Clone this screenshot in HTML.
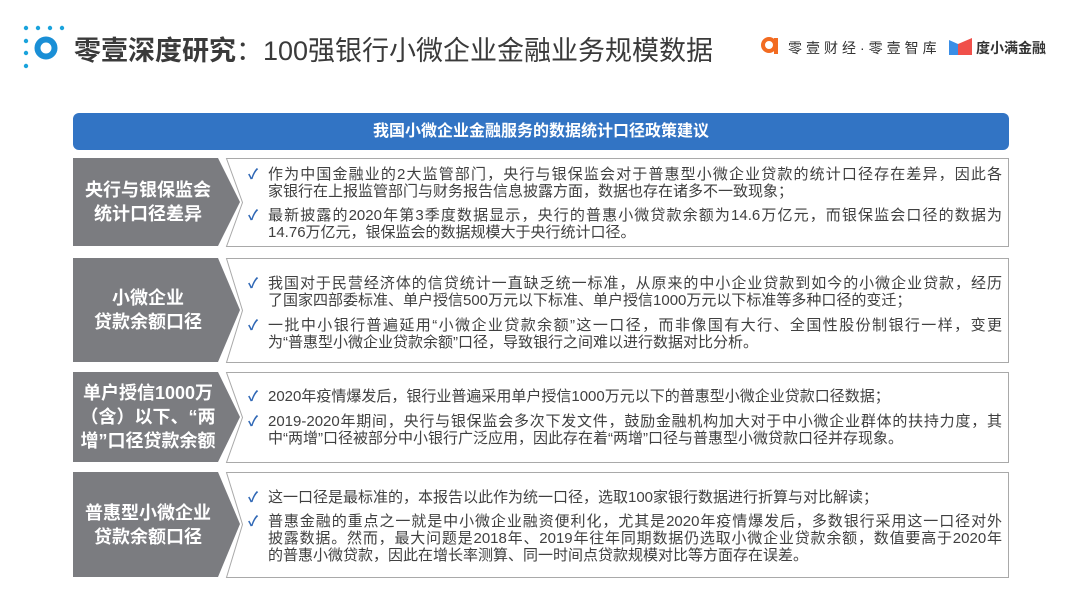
<!DOCTYPE html>
<html><head><meta charset="utf-8"><style>
body{margin:0;width:1080px;height:608px;background:#fff;position:relative;overflow:hidden;font-family:"Liberation Sans","Noto Sans CJK SC",sans-serif;}
.abs{position:absolute}
.lab{position:absolute;left:73px;width:150px;color:#fff;font-weight:bold;font-size:18px;line-height:24px;text-align:center;display:flex;flex-direction:column;justify-content:center}
.txt{position:absolute;left:268px;width:734px;color:#404040;font-size:15px;line-height:17px}
.l{text-align:justify;text-align-last:justify;white-space:nowrap}
.e{white-space:nowrap}
.ck{position:absolute;left:-20px;color:#2f67b5;font-size:14px;font-weight:bold}
.p{position:relative}
</style></head><body>
<svg class="abs" style="left:20px;top:22px" width="50" height="50">
<g fill="#1aa3dc"><circle cx="6" cy="6" r="2.2"/><circle cx="18" cy="6" r="2.2"/><circle cx="30" cy="6" r="2.2"/><circle cx="42" cy="6" r="2.2"/><circle cx="6" cy="19" r="2.2"/><circle cx="6" cy="31" r="2.2"/><circle cx="6" cy="44" r="2.2"/></g>
<circle cx="26" cy="26" r="8.5" fill="none" stroke="#1a8fd6" stroke-width="6"/>
</svg>
<div class="abs" style="left:74px;top:29px;font-size:27px;color:#3a3a3a;white-space:nowrap"><b>零壹深度研究</b>：100强银行小微企业金融业务规模数据</div>
<svg class="abs" style="left:760px;top:36px" width="22" height="18"><circle cx="9" cy="9" r="6" fill="none" stroke="#f26b21" stroke-width="4"/><path d="M16 2v16" stroke="#f26b21" stroke-width="4"/></svg>
<div class="abs" style="left:788px;top:38px;font-size:14px;color:#333;letter-spacing:4px;white-space:nowrap">零壹财经·零壹智库</div>
<svg class="abs" style="left:949px;top:37px" width="24" height="18"><path d="M0 3l9 4v11H0z" fill="#3a8ee6"/><path d="M9 7l14-6v17H9z" fill="#f0504a"/></svg>
<div class="abs" style="left:976px;top:38px;font-size:14px;color:#333;font-weight:bold;white-space:nowrap">度小满金融</div>
<div class="abs" style="left:73px;top:113px;width:936px;height:37px;background:#3274c4;border-radius:6px;color:#fff;font-weight:bold;font-size:16px;line-height:37px;text-align:center">我国小微企业金融服务的数据统计口径政策建议</div>
<svg class="abs" style="left:0;top:0" width="1080" height="608">
<g fill="#7b7c80">
<polygon points="73,158 218,158 240,202 218,246 73,246"/>
<polygon points="73,258 218,258 240,310 218,362 73,362"/>
<polygon points="73,372 218,372 240,417 218,462 73,462"/>
<polygon points="73,472 218,472 240,524 218,577 73,577"/>
</g>
<g fill="#fff" stroke="#a9a9a9" stroke-width="1">
<polygon points="226.5,158.5 1008.5,158.5 1008.5,246.5 226.5,246.5 242.5,202.5"/>
<polygon points="226.5,258.5 1008.5,258.5 1008.5,362.5 226.5,362.5 242.5,310.5"/>
<polygon points="226.5,372.5 1008.5,372.5 1008.5,462.5 226.5,462.5 242.5,417.5"/>
<polygon points="226.5,472.5 1008.5,472.5 1008.5,577.5 226.5,577.5 242.5,524.5"/>
</g>
</svg>
<div class="lab" style="top:158px;height:88px">央行与银保监会<br>统计口径差异</div>
<div class="lab" style="top:258px;height:104px">小微企业<br>贷款余额口径</div>
<div class="lab" style="top:372px;height:90px">单户授信1000万<br>（含）以下、“两<br>增”口径贷款余额</div>
<div class="lab" style="top:472px;height:105px">普惠型小微企业<br>贷款余额口径</div>

<div class="txt" style="top:166px"><div class="p"><span class="ck">✓</span><div class="l">作为中国金融业的2大监管部门，央行与银保监会对于普惠型小微企业贷款的统计口径存在差异，因此各</div><div class="e">家银行在上报监管部门与财务报告信息披露方面，数据也存在诸多不一致现象；</div></div></div>
<div class="txt" style="top:207px"><div class="p"><span class="ck">✓</span><div class="l">最新披露的2020年第3季度数据显示，央行的普惠小微贷款余额为14.6万亿元，而银保监会口径的数据为</div><div class="e">14.76万亿元，银保监会的数据规模大于央行统计口径。</div></div></div>

<div class="txt" style="top:275px"><div class="p"><span class="ck">✓</span><div class="l">我国对于民营经济体的信贷统计一直缺乏统一标准，从原来的中小企业贷款到如今的小微企业贷款，经历</div><div class="e">了国家四部委标准、单户授信500万元以下标准、单户授信1000万元以下标准等多种口径的变迁；</div></div></div>
<div class="txt" style="top:317px"><div class="p"><span class="ck">✓</span><div class="l">一批中小银行普遍延用“小微企业贷款余额”这一口径，而非像国有大行、全国性股份制银行一样，变更</div><div class="e">为“普惠型小微企业贷款余额”口径，导致银行之间难以进行数据对比分析。</div></div></div>

<div class="txt" style="top:388px"><div class="p"><span class="ck">✓</span><div class="e">2020年疫情爆发后，银行业普遍采用单户授信1000万元以下的普惠型小微企业贷款口径数据；</div></div></div>
<div class="txt" style="top:413px"><div class="p"><span class="ck">✓</span><div class="l">2019-2020年期间，央行与银保监会多次下发文件，鼓励金融机构加大对于中小微企业群体的扶持力度，其</div><div class="e">中“两增”口径被部分中小银行广泛应用，因此存在着“两增”口径与普惠型小微贷款口径并存现象。</div></div></div>

<div class="txt" style="top:489px"><div class="p"><span class="ck">✓</span><div class="e">这一口径是最标准的，本报告以此作为统一口径，选取100家银行数据进行折算与对比解读；</div></div></div>
<div class="txt" style="top:513px"><div class="p"><span class="ck">✓</span><div class="l">普惠金融的重点之一就是中小微企业融资便利化，尤其是2020年疫情爆发后，多数银行采用这一口径对外</div><div class="l">披露数据。然而，最大问题是2018年、2019年往年同期数据仍选取小微企业贷款余额，数值要高于2020年</div><div class="e">的普惠小微贷款，因此在增长率测算、同一时间点贷款规模对比等方面存在误差。</div></div></div>
</body></html>
